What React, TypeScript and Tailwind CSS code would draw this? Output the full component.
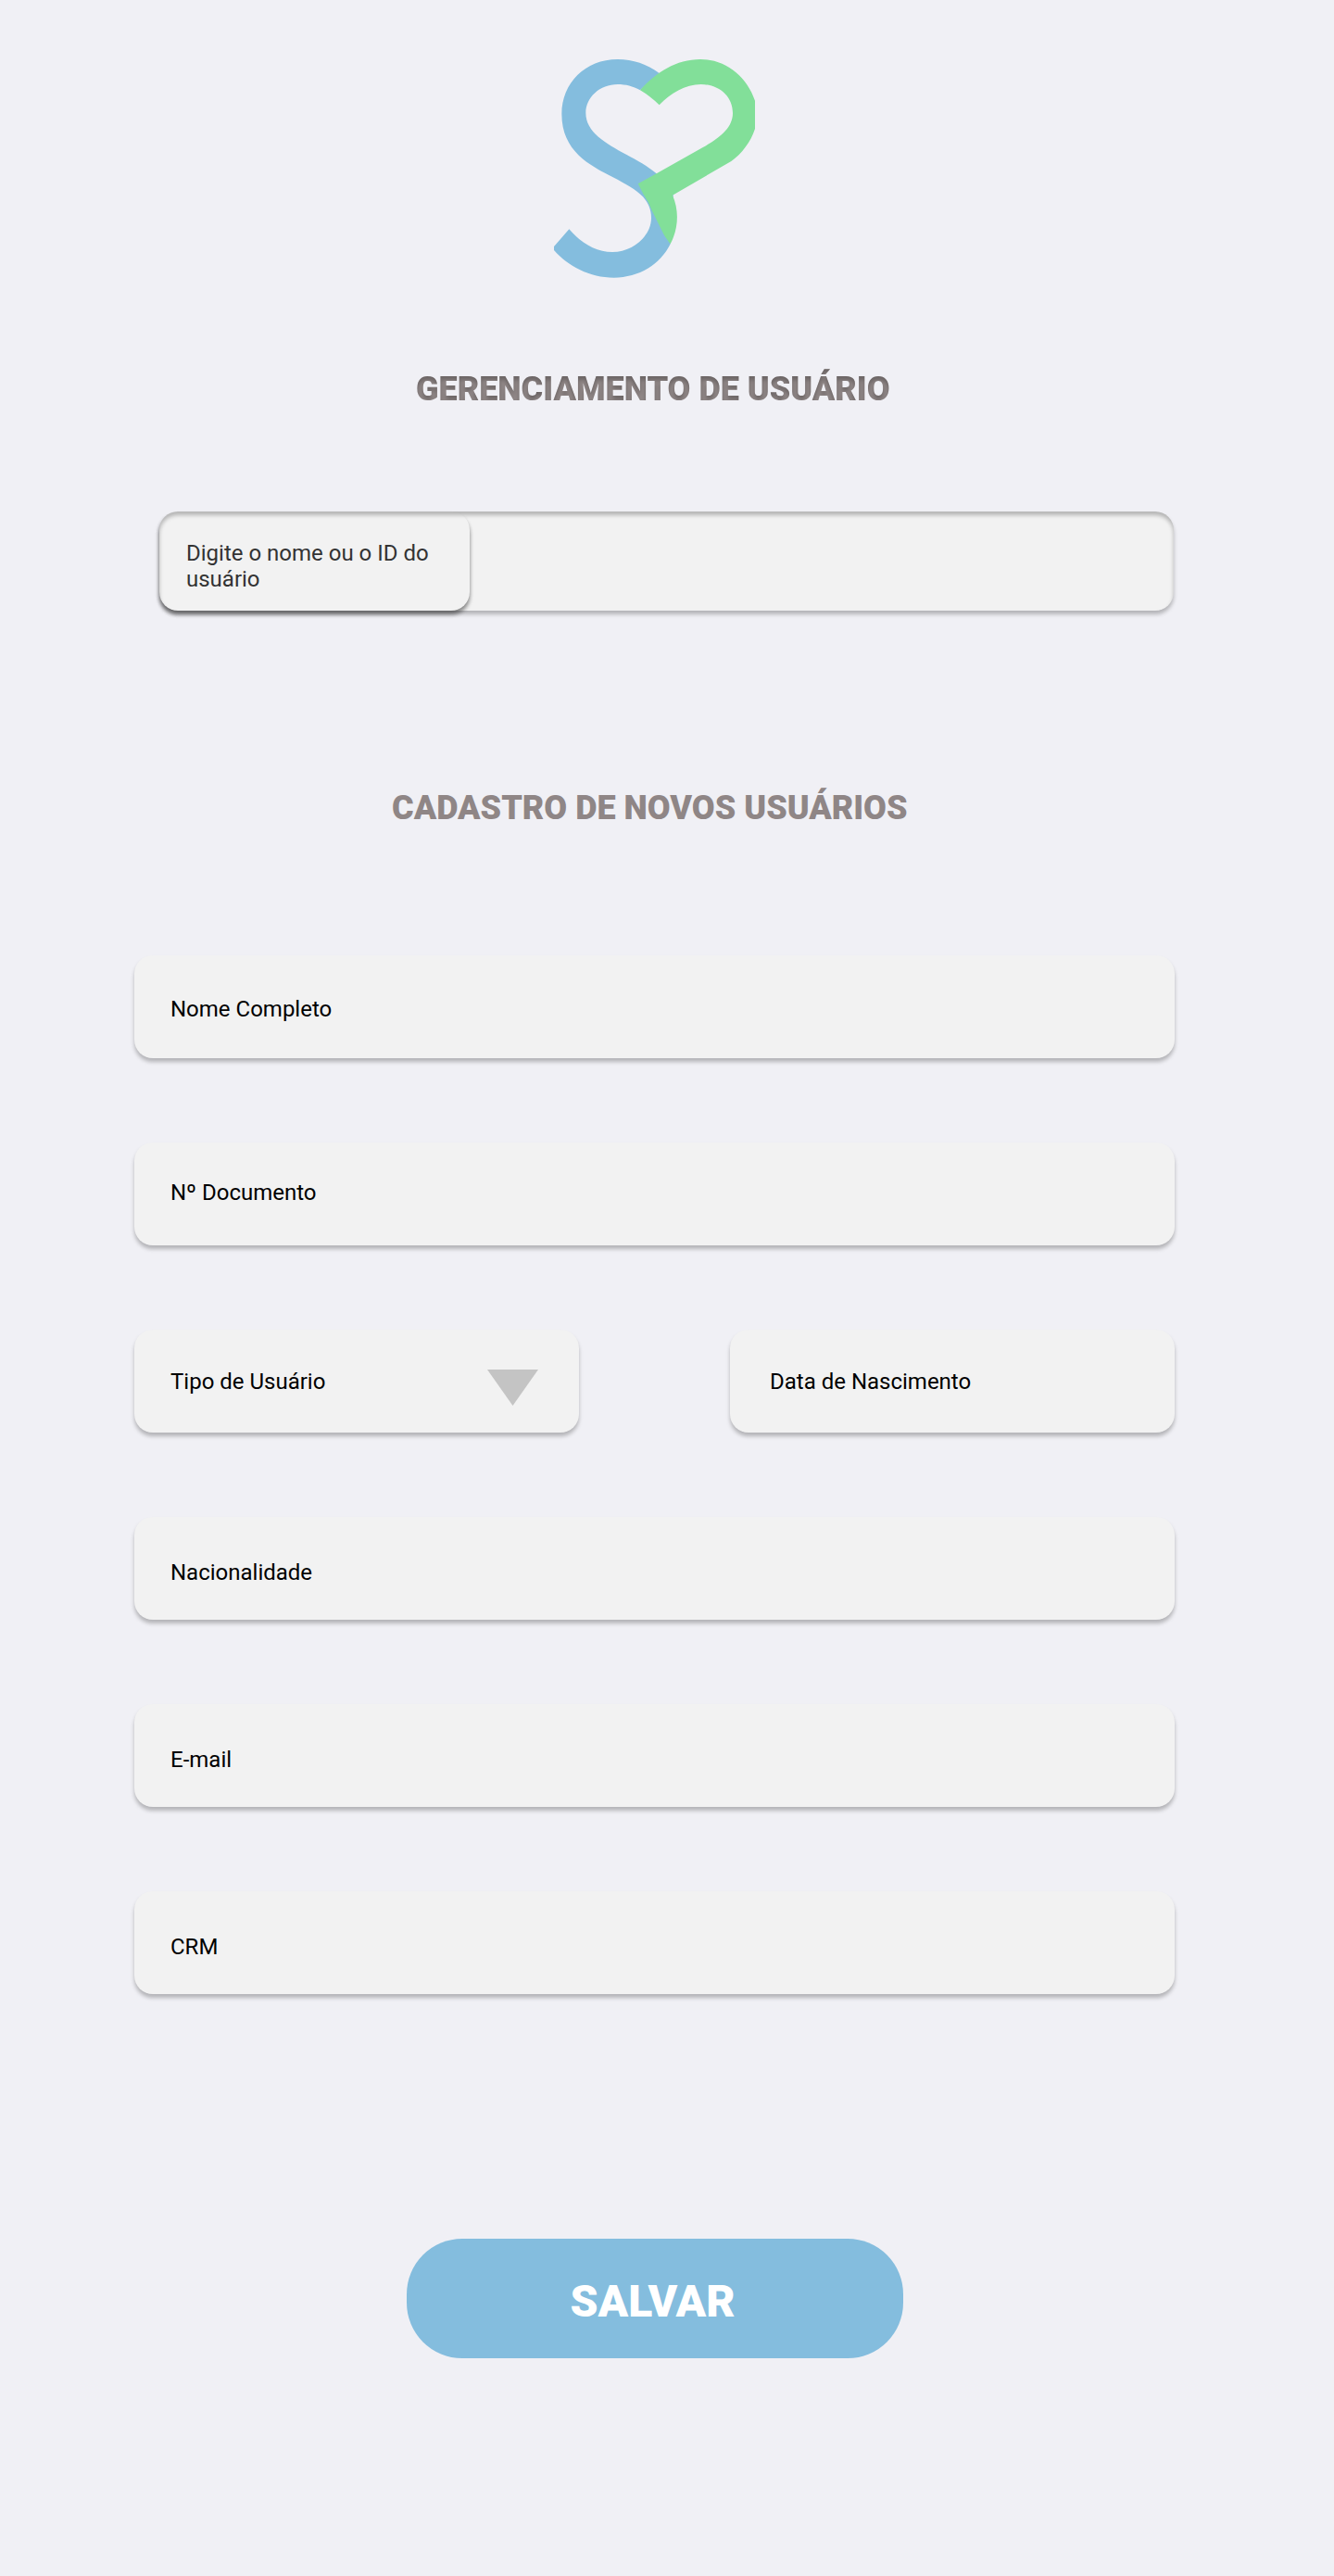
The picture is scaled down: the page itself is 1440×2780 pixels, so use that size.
import React from "react";

const fieldShadow = "shadow-[0_4px_4px_rgba(0,0,0,0.25)]";

function Logo() {
  return (
    <svg
      className="mt-[50px] ml-[580px] h-[260px] w-[250px]"
      viewBox="0 0 750 780"
      aria-label="SP"
    >
      <defs>
        {/* Inner shadow used by the main heading */}
        <filter id="inner-shadow" x="-5%" y="-20%" width="110%" height="140%" colorInterpolationFilters="sRGB">
          <feOffset in="SourceAlpha" dy="4" result="shifted" />
          <feGaussianBlur in="shifted" stdDeviation="2" result="soft" />
          <feComposite in="SourceAlpha" in2="soft" operator="out" result="edge" />
          <feColorMatrix in="edge" type="matrix" values="0 0 0 0 0  0 0 0 0 0  0 0 0 0 0  0 0 0 0.25 0" result="shade" />
          <feMerge>
            <feMergeNode in="SourceGraphic" />
            <feMergeNode in="shade" />
          </feMerge>
        </filter>
      </defs>
      <path
        fill="#84bdde"
        d="M395 87C355 58 310 42 260 42C155 42 79 119 79 219C79 340 170 385 245 424C285 445 320 464 342 487C360 508 369 530 369 556C369 614 310 666 243 666C190 666 142 637 103 592L54 648V660C100 712 170 749 248 749C330 749 398 706 431 640L440 480L386 412C355 386 325 370 288 350C220 314 157 277 157 216C157 165 203 123 260 123C287 123 309 129 333 142Z"
      />
      <path
        fill="#82df99"
        d="M333 142C385 84 450 42 528 42C610 42 678 97 705 176V267C691 310 662 348 628 372L438 482C460 532 457 590 431 640C424 630 414 618 408 606L372 533Q360 502 343 478L326 445L386 412L535 328C592 296 633 263 633 216C633 162 588 123 530 123C479 123 431 152 395 190Q364 160 333 142Z"
      />
    </svg>
  );
}

function Field({
  label,
  className = "pl-[39px]",
  children,
}: {
  label: string;
  className?: string;
  children?: React.ReactNode;
}) {
  return (
    <label
      className={`flex h-[111px] items-start justify-between rounded-[20px] bg-[#f2f2f2] text-2xl leading-7 text-black ${fieldShadow} ${className}`}
    >
      <span>{label}</span>
      {children}
    </label>
  );
}

export default function App() {
  return (
    <main className="flex h-[2780px] w-[1440px] flex-col overflow-hidden bg-[#f0f0f5] font-['Roboto',sans-serif]">
      <Logo />

      <h1 className="mt-[89px] ml-[449px] text-4xl leading-[42px] font-black whitespace-nowrap text-[#8f8686] [filter:url(#inner-shadow)]">
        GERENCIAMENTO DE USUÁRIO
      </h1>

      <div className="mt-[111px] ml-[172px] h-[107px] w-[1095px] rounded-[20px] bg-[#f2f2f2] shadow-[0_4px_4px_rgba(0,0,0,0.25),inset_0_4px_4px_rgba(0,0,0,0.25)]">
        <div className="h-[107px] w-[335px] rounded-[20px] pt-[31px] pl-[29px] text-2xl leading-7 text-[#333] shadow-[0_4px_4px_rgba(0,0,0,0.25),0_4px_4px_rgba(0,0,0,0.25)]">
          Digite o nome ou o ID do usuário
        </div>
      </div>

      <h2 className="mt-[192px] ml-[423px] text-4xl leading-[42px] font-black whitespace-nowrap text-[#8f8686]">
        CADASTRO DE NOVOS USUÁRIOS
      </h2>

      <form className="mt-[138px] ml-[145px] flex w-[1123px] flex-col gap-[91px]">
        <Field label="Nome Completo" className="pt-11 pl-[39px]" />
        <Field label="Nº Documento" className="pt-10 pl-[39px]" />
        <div className="flex justify-between">
          <Field label="Tipo de Usuário" className="w-[480px] pt-[42px] pr-[44px] pl-[39px]">
            <svg className="mt-[1px] h-[39px] w-[55px]" viewBox="0 0 55 39">
              <path d="M0 0H55L27.5 39Z" fill="#c4c4c4" />
            </svg>
          </Field>
          <Field label="Data de Nascimento" className="w-[480px] pt-[42px] pl-[43px]" />
        </div>
        <Field label="Nacionalidade" className="pt-[46px] pl-[39px]" />
        <Field label="E-mail" className="pt-[46px] pl-[39px]" />
        <Field label="CRM" className="pt-[46px] pl-[39px]" />
      </form>

      <button className="mt-[264px] ml-[439px] h-[129px] w-[536px] rounded-[60px] bg-[#84bdde] pr-[5px] pt-1.5 text-5xl font-black text-white">
        SALVAR
      </button>
    </main>
  );
}
